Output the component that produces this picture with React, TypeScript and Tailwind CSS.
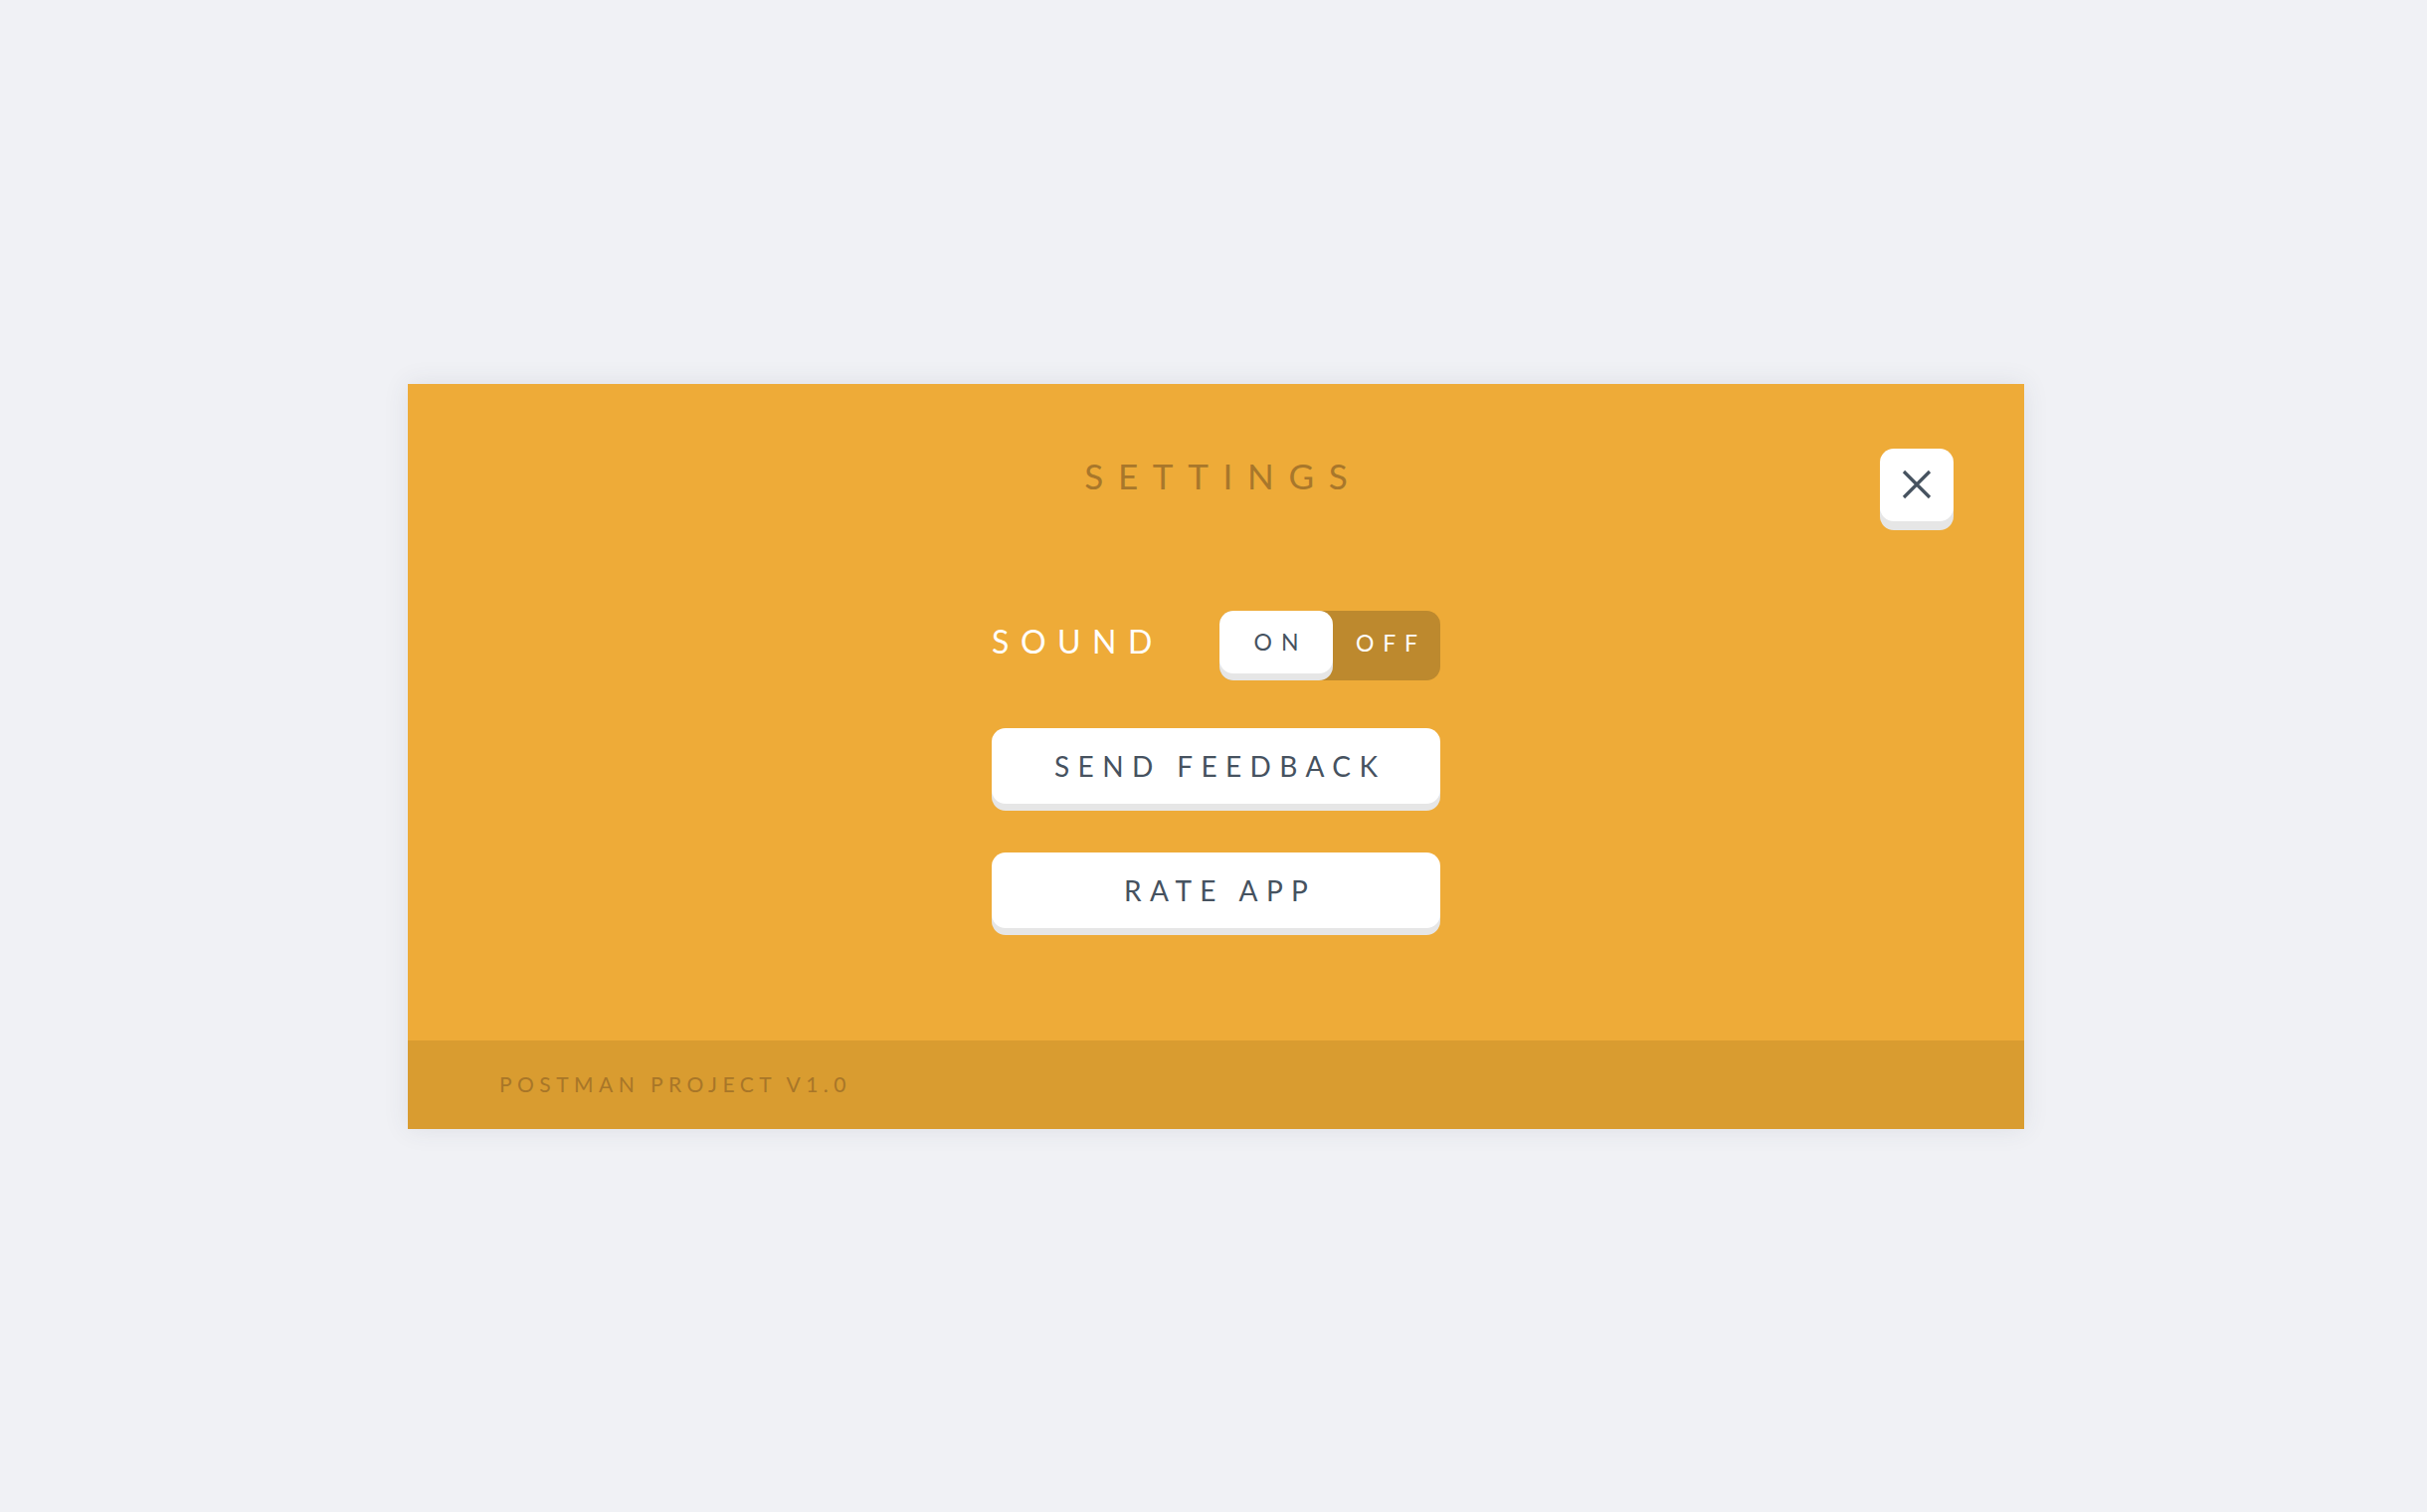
import React from "react";

export default function App() {
  const font = { fontFamily: "Lato, 'Open Sans', sans-serif" };
  return (
    <div
      className="w-[2440px] h-[1520px] bg-[#f0f1f5] flex items-center justify-center"
      style={font}
    >
      <div className="relative ml-[5px] w-[1625px] h-[749px] bg-[#eeab38] flex flex-col shadow-[0_0_24px_rgba(60,70,90,0.10)]">
        <button className="absolute top-[65px] right-[71px] w-[74px] h-[73px] bg-white rounded-[14px] shadow-[0_9px_0_#e6e6e6] flex items-center justify-center">
          <svg width="30" height="30" viewBox="0 0 30 30" fill="none">
            <path d="M2 2 L28 28 M28 2 L2 28" stroke="#46525f" strokeWidth="3.2" strokeLinecap="butt" />
          </svg>
        </button>
        <div className="flex-1 flex flex-col items-center">
          <h1 className="mt-[71px] text-[35px] leading-[42px] tracking-[0.42em] pl-[0.42em] text-[#a8772b] font-normal">
            SETTINGS
          </h1>
          <div className="mt-[115px] w-[451px] flex items-center justify-between">
            <span className="mb-[7px] text-[32px] leading-[40px] tracking-[0.36em] text-white">SOUND</span>
            <div className="w-[222px] h-[70px] rounded-[14px] bg-[#bd892e] flex items-start">
              <div className="w-[114px] h-[63px] rounded-[14px] bg-white shadow-[0_7px_0_#e6e6e6] flex items-center justify-center text-[23px] tracking-[0.4em] pl-[0.4em] text-[#46525f]">
                ON
              </div>
              <div className="flex-1 h-[63px] flex items-center justify-center text-[23px] tracking-[0.38em] pl-[0.38em] pt-[2px] text-white">
                OFF
              </div>
            </div>
          </div>
          <button className="mt-[48px] w-[451px] h-[76px] rounded-[14px] bg-white shadow-[0_7px_0_#e6e6e6] flex items-center justify-center text-[28px] tracking-[0.30em] pl-[0.30em] text-[#46525f]">
            SEND FEEDBACK
          </button>
          <button className="mt-[49px] w-[451px] h-[76px] rounded-[14px] bg-white shadow-[0_7px_0_#e6e6e6] flex items-center justify-center text-[28px] tracking-[0.30em] pl-[0.30em] text-[#46525f]">
            RATE APP
          </button>
        </div>
        <div className="h-[89px] bg-[#d99c30] flex items-center pl-[92px]">
          <span className="text-[21px] tracking-[0.26em] text-[#a87628]">POSTMAN PROJECT V1.0</span>
        </div>
      </div>
    </div>
  );
}
